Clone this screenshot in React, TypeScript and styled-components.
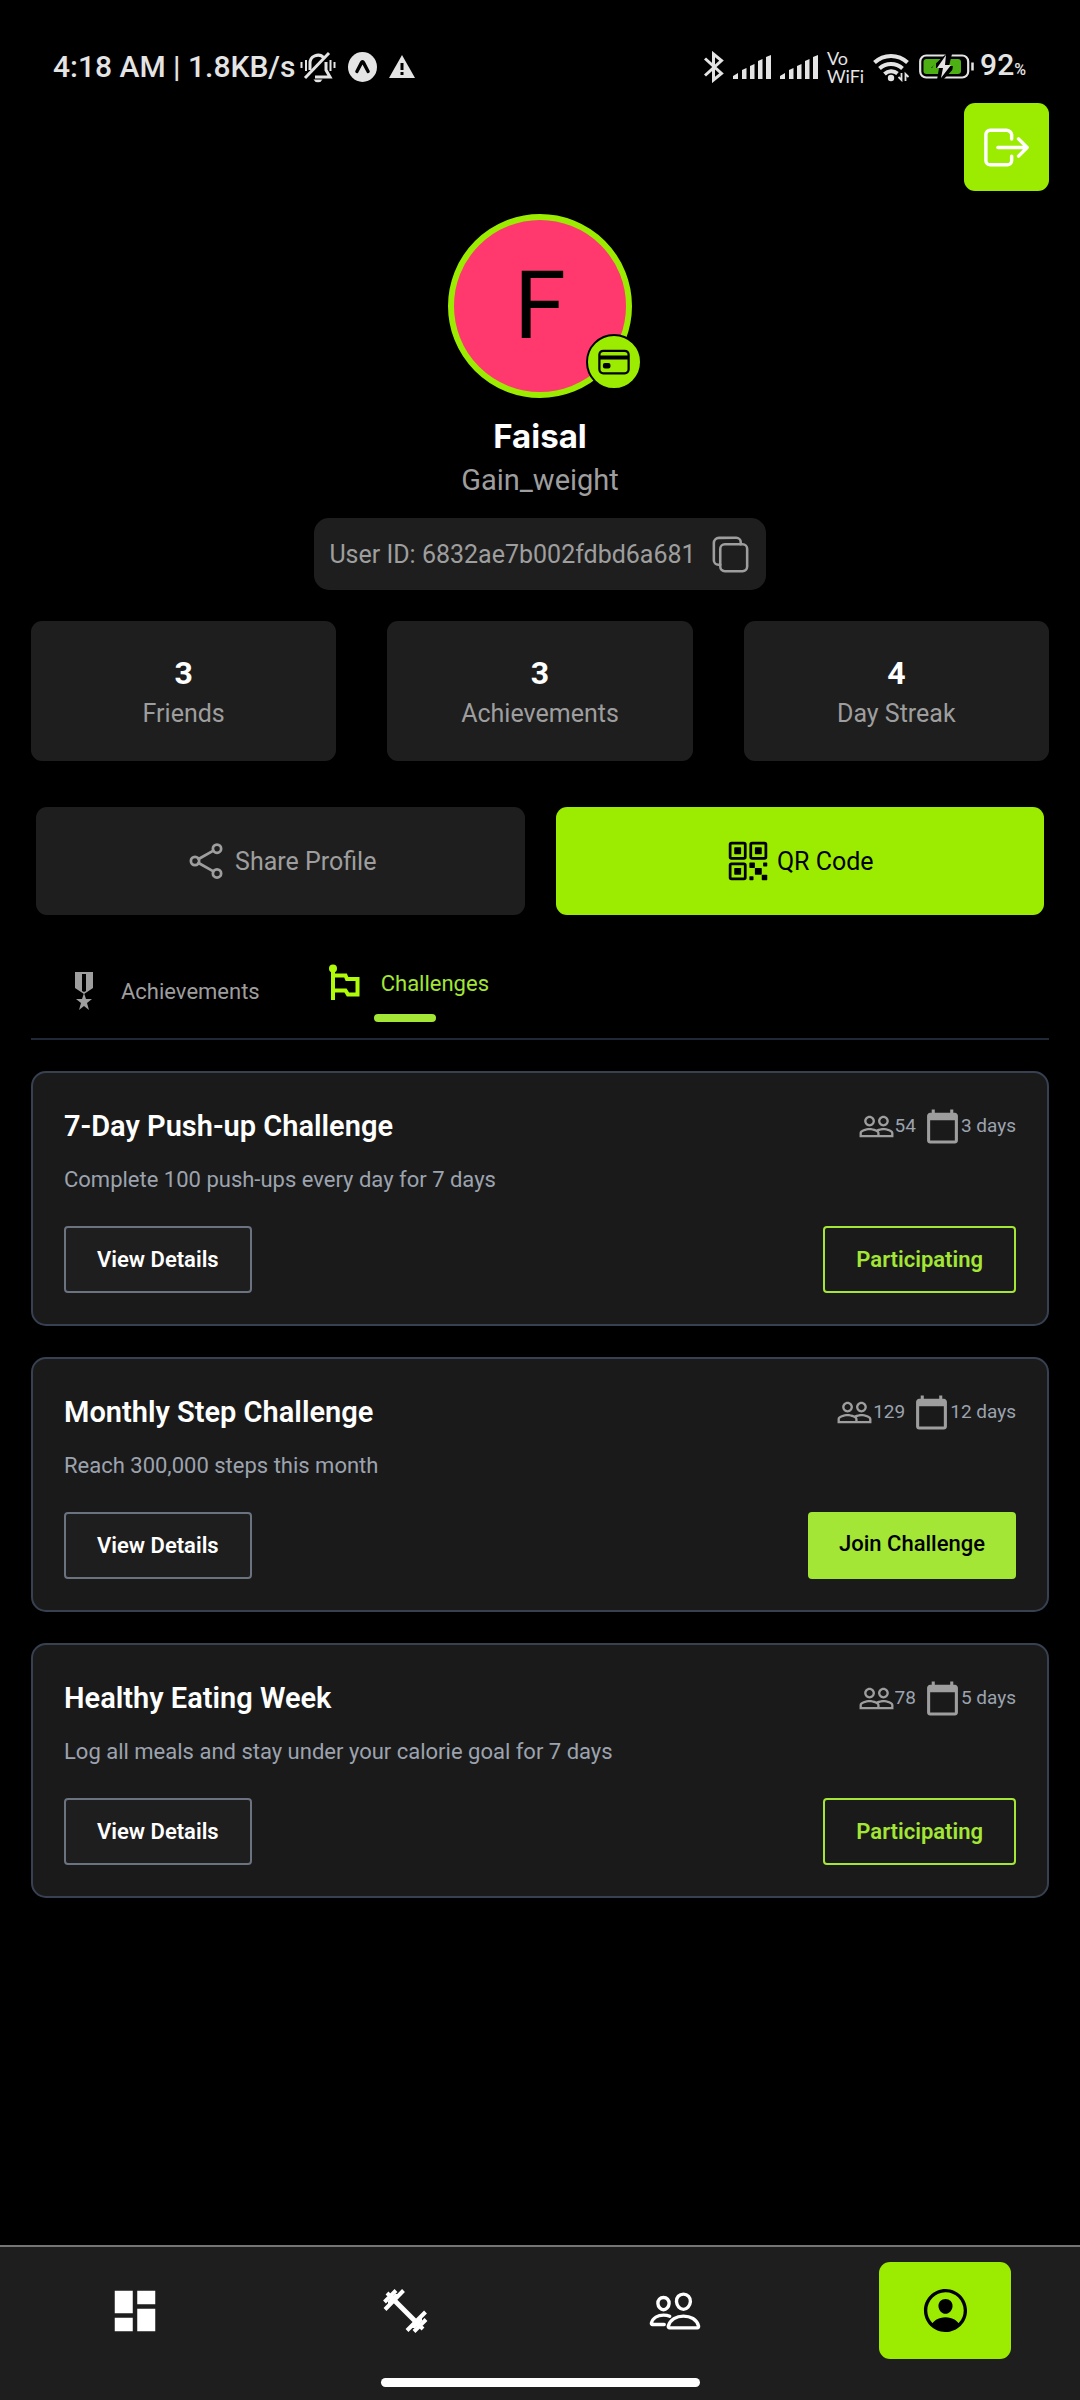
import React from "react";
import styled, { createGlobalStyle } from "styled-components";
import {
  IoCardOutline,
  IoCopyOutline,
  IoLogOutOutline,
  IoPeopleOutline,
  IoPersonCircleOutline,
  IoQrCodeOutline,
  IoShareSocialOutline,
} from "react-icons/io5";
import { MdCalendarToday, MdDashboard, MdPeopleOutline } from "react-icons/md";

const color = {
  lime: "#9bec00",
  limeSoft: "#a3e635",
  surface: "#1e1e1e",
  card: "#1a1a1a",
  muted: "#9e9e9e",
  slate: "#9ca3af",
  status: "#e4e4e4",
};

const GlobalStyle = createGlobalStyle`
  * { box-sizing: border-box; }
  body {
    margin: 0;
    background: #000;
    color: #fff;
    font-family: Roboto, "Liberation Sans", sans-serif;
  }
  button {
    margin: 0;
    padding: 0;
    border: 0;
    background: none;
    color: inherit;
    font-family: inherit;
    cursor: pointer;
  }
  h1, h2, p, dl, dt, dd { margin: 0; font-weight: 400; }
  svg { display: block; flex: none; }
`;

const Screen = styled.div`
  display: flex;
  flex-direction: column;
  min-height: 100vh;
`;

/* Status bar */

const StatusBar = styled.header`
  display: flex;
  align-items: center;
  justify-content: space-between;
  padding: 47px 54px 16px 53px;
  color: ${color.status};
`;

const StatusGroup = styled.div<{ $gap: number }>`
  display: flex;
  align-items: center;
  gap: ${(p) => p.$gap}px;
  height: 40px;
`;

const Clock = styled.span`
  font-size: 30px;
  font-weight: 500;
  line-height: 40px;
`;

const StatusIcons = styled.span`
  display: flex;
  align-items: center;
  gap: 12px;
`;

const VoWifi = styled.span`
  display: flex;
  flex-direction: column;
  font-family: Lato, sans-serif;
  font-size: 18px;
  font-weight: 400;
  line-height: 18px;
`;

const Charge = styled.span`
  display: flex;
  align-items: center;
  gap: 6px;
`;

const Percent = styled.span`
  font-size: 30px;
  font-weight: 500;
  line-height: 40px;

  small {
    font-size: 16px;
  }
`;

/* Profile */

const Main = styled.main`
  display: flex;
  flex-direction: column;
  padding: 0 31px 31px;
`;

const LogoutButton = styled.button`
  display: flex;
  align-items: center;
  align-self: flex-end;
  height: 88px;
  padding: 0 15px;
  border-radius: 11px;
  background: ${color.lime};
  color: #fff;
`;

const Profile = styled.section`
  display: flex;
  flex-direction: column;
  align-items: center;
  margin-top: 23px;
`;

const Avatar = styled.div`
  position: relative;
  display: flex;
  align-items: center;
  justify-content: center;
  width: 184px;
  height: 184px;
  border: 6px solid ${color.lime};
  border-radius: 50%;
  background: #ff386e;
  color: #000;
  font-size: 94px;
  line-height: 110px;
`;

const AvatarBadge = styled.button`
  position: absolute;
  right: -16px;
  bottom: 2px;
  display: flex;
  align-items: center;
  justify-content: center;
  width: 56px;
  height: 56px;
  border: 2px solid #000;
  border-radius: 50%;
  background: ${color.lime};
  color: #000;
`;

const Name = styled.h1`
  margin-top: 16px;
  font-family: Inter, Roboto, sans-serif;
  font-size: 33px;
  font-weight: 700;
  line-height: 44px;
`;

const Goal = styled.p`
  color: ${color.muted};
  font-size: 29px;
  line-height: 44px;
`;

const UserId = styled.div`
  display: flex;
  align-items: center;
  gap: 14px;
  margin-top: 16px;
  padding: 15px;
  border-radius: 15px;
  background: ${color.surface};
  color: ${color.muted};
  font-size: 25px;
  line-height: 40px;
`;

const Caption = styled.span`
  padding-top: 2px;
`;

const Stats = styled.dl`
  display: grid;
  grid-template-columns: repeat(3, 1fr);
  gap: 51px;
  margin-top: 31px;
`;

const Stat = styled.div`
  display: flex;
  flex-direction: column-reverse;
  padding: 31px 15px 27px;
  border-radius: 11px;
  background: ${color.surface};
  text-align: center;

  dt {
    color: ${color.muted};
    font-size: 25px;
    line-height: 40px;
  }

  dd {
    font-size: 32px;
    font-weight: 700;
    line-height: 42px;
  }
`;

const Actions = styled.div`
  display: grid;
  grid-template-columns: 1fr 1fr;
  gap: 31px;
  margin: 46px 5px 0;
`;

const ActionButton = styled.button<{ $primary?: boolean }>`
  display: flex;
  align-items: center;
  justify-content: center;
  gap: 7px;
  height: 108px;
  border-radius: 11px;
  background: ${(p) => (p.$primary ? color.lime : color.surface)};
  color: ${(p) => (p.$primary ? "#000" : color.muted)};
  font-size: 25px;
  line-height: 40px;
`;

/* Tabs */

const Tabs = styled.nav`
  display: flex;
  align-items: center;
  gap: 61px;
  margin-top: 45px;
  padding: 0 30px 16px;
  border-bottom: 2px solid #1f2937;
`;

const Tab = styled.button<{ $active?: boolean }>`
  display: flex;
  flex-direction: column;
  align-items: center;
  gap: 8px;
  color: ${(p) => (p.$active ? color.limeSoft : color.muted)};
  font-size: 22px;
  line-height: 44px;
`;

const TabLabel = styled.span`
  display: flex;
  align-items: center;
  gap: 14px;
`;

const TabMarker = styled.span`
  width: 62px;
  height: 8px;
  border-radius: 4px;
  background: ${color.limeSoft};
`;

/* Challenges */

const ChallengeList = styled.section`
  display: flex;
  flex-direction: column;
  gap: 31px;
  margin-top: 31px;
`;

const Card = styled.article`
  padding: 31px;
  border: 2px solid #374151;
  border-radius: 15px;
  background: ${color.card};
`;

const CardRow = styled.div`
  display: flex;
  justify-content: space-between;
`;

const CardTitle = styled.h2`
  font-size: 29px;
  font-weight: 600;
  line-height: 44px;
`;

const Meta = styled.div`
  display: flex;
  align-items: center;
  gap: 8px;
`;

const MetaItem = styled.span`
  display: flex;
  align-items: center;
  color: ${color.slate};
  font-size: 19px;
  line-height: 44px;

  svg {
    color: ${color.muted};
  }
`;

const Description = styled.p`
  margin: 16px 0 31px;
  color: ${color.slate};
  font-size: 22px;
  line-height: 31px;
`;

const CardButton = styled.button<{ $kind: "plain" | "joined" | "join" }>`
  display: flex;
  align-items: flex-start;
  padding: 16px 31px;
  border: ${(p) => (p.$kind === "join" ? "0" : "2px solid")};
  border-color: ${(p) => (p.$kind === "plain" ? "#6b7280" : color.limeSoft)};
  border-radius: 4px;
  background: ${(p) =>
    p.$kind === "join" ? color.limeSoft : p.$kind === "plain" ? color.surface : color.card};
  color: ${(p) =>
    p.$kind === "join" ? "#000" : p.$kind === "plain" ? "#fff" : color.limeSoft};
  font-size: 22px;
  font-weight: ${(p) => (p.$kind === "join" ? 500 : 600)};
  line-height: 31px;
`;

/* Bottom navigation */

const BottomNav = styled.nav`
  display: flex;
  flex-direction: column;
  align-items: center;
  gap: 19px;
  margin-top: auto;
  padding: 15px 0 13px;
  border-top: 2px solid #757575;
  background: ${color.surface};
`;

const NavItems = styled.div`
  display: grid;
  grid-template-columns: repeat(4, 1fr);
  justify-items: center;
  width: 100%;
`;

const NavButton = styled.button<{ $active?: boolean }>`
  display: flex;
  align-items: center;
  justify-content: center;
  width: 132px;
  height: 97px;
  border-radius: 11px;
  background: ${(p) => (p.$active ? color.lime : "transparent")};
  color: ${(p) => (p.$active ? "#000" : "#fff")};
`;

const HomeIndicator = styled.div`
  width: 319px;
  height: 9px;
  border-radius: 5px;
  background: #fff;
`;

/* Drawings */

const MutedBell = () => (
  <svg width="36" height="32" viewBox="0 0 36 32" fill="none" stroke="currentColor" strokeWidth="3">
    <path d="M10 19v-6a8 8 0 0 1 14-6M26 11v8l4 7H15" />
    <path d="M5 27 29 2" />
    <path d="M1.500 11v6M6 9v11M30.500 9v11M34.500 11v6" strokeWidth="2" />
    <path d="M13.500 28.500h9a5 5 0 0 1-9 0z" fill="currentColor" stroke="none" />
  </svg>
);

const ExpoBadge = () => (
  <svg width="29" height="30" viewBox="0 0 29 30">
    <ellipse cx="14.500" cy="15" rx="14.500" ry="15" fill="currentColor" />
    <path
      d="M14.500 8c1 0 2 .7 2.600 2l4.600 9c.6 1.300-1.600 3.200-2.800 1.700L14.500 12.500l-4.400 8.200c-1.200 1.500-3.400-.4-2.800-1.700l4.600-9c.6-1.300 1.600-2 2.600-2z"
      fill="#000"
    />
  </svg>
);

const Warning = () => (
  <svg width="26" height="24" viewBox="0 0 26 24">
    <path d="M13 0 26 23H0z" fill="currentColor" />
    <path d="M11.500 8h3v7h-3zM11.500 17h3v3h-3z" fill="#000" />
  </svg>
);

const Bluetooth = () => (
  <svg width="20" height="32" viewBox="0 0 20 32" fill="none" stroke="currentColor" strokeWidth="3">
    <path d="M1 7.500 17.500 22.500 9.500 29V3l8 6.500L1 24.500" />
  </svg>
);

const Signal = () => (
  <svg width="38" height="24" viewBox="0 0 38 24" fill="currentColor">
    <path d="M0 24v-3l5-3v6zM9 24v-9l4.500-2v11zM17 24V11l4.500-2v15zM25 24V6l4.500-2v20zM33 24V2l5-2v24z" />
  </svg>
);

const Wifi = () => (
  <svg width="37" height="29" viewBox="0 0 37 29" fill="none" stroke="currentColor" strokeWidth="4">
    <path d="M1.500 9.500a24 24 0 0 1 33 0M6.500 15.500a17 17 0 0 1 23 0M11.500 21a10 10 0 0 1 13-.500" />
    <circle cx="18" cy="25" r="3.200" fill="currentColor" stroke="none" />
    <path d="M28.500 20v7l-3-3M32.500 28v-7l3 3" strokeWidth="1.800" />
  </svg>
);

const Battery = () => (
  <svg width="55" height="26" viewBox="0 0 55 26">
    <rect x="1.200" y="1.500" width="48" height="22" rx="6" fill="none" stroke="currentColor" strokeWidth="2.200" />
    <rect x="4.500" y="5" width="37.500" height="15" rx="3" fill="#4caf13" />
    <path d="M53.500 8.500v8" stroke="currentColor" strokeWidth="2.500" />
    <path d="M27 0 12 14h8l-2 12h6l13-14h-7l3-12z" fill="#000" />
    <path d="M27 1 18 14h6l-2 10 10-13h-6z" fill="currentColor" />
    <path d="m17 7-4 7h4M33 19l5-8h-4" fill="#4caf13" />
  </svg>
);

const Medal = () => (
  <svg width="46" height="46" viewBox="0 0 46 46" fill="currentColor">
    <path d="M14 4h18v16l-9 6-9-6zM21 6v17l2 1 2-1V6z" fillRule="evenodd" />
    <path d="m23 25 2 6h6l-5 4 2 7-5-4-5 4 2-7-5-4h6z" />
  </svg>
);

const Flag = () => (
  <svg width="46" height="46" viewBox="0 0 46 46" fill="none" stroke="#b0fb08" strokeWidth="4">
    <circle cx="12" cy="8.500" r="4" fill="#b0fb08" stroke="none" />
    <path d="M12 8v32M12 15.500h12.500l1.500 3.500h10.500v15.500H27l-2.500-4H12" />
  </svg>
);

const Dumbbell = () => (
  <svg width="54" height="54" viewBox="0 0 54 54" fill="currentColor" stroke="currentColor" strokeWidth="4">
    <path d="M15 15 39 39" strokeWidth="5" />
    <path d="M7 25.500 25.500 6.500M6.500 18 18 6.500M9 9l6 6M29 46.500 47.500 28M36 47.500 48 35.500M39 39l6 6" />
    <path d="m10 17 7-7 5 0-12 12zM44 37l-7 7-5 0 12-12z" stroke="none" />
  </svg>
);

type Challenge = {
  title: string;
  text: string;
  people: number;
  days: number;
  joined: boolean;
};

const challenges: Challenge[] = [
  {
    title: "7-Day Push-up Challenge",
    text: "Complete 100 push-ups every day for 7 days",
    people: 54,
    days: 3,
    joined: true,
  },
  {
    title: "Monthly Step Challenge",
    text: "Reach 300,000 steps this month",
    people: 129,
    days: 12,
    joined: false,
  },
  {
    title: "Healthy Eating Week",
    text: "Log all meals and stay under your calorie goal for 7 days",
    people: 78,
    days: 5,
    joined: true,
  },
];

const stats = [
  { label: "Friends", value: 3 },
  { label: "Achievements", value: 3 },
  { label: "Day Streak", value: 4 },
];

export default function App() {
  return (
    <Screen>
      <GlobalStyle />
      <StatusBar>
        <StatusGroup $gap={4}>
          <Clock>4:18 AM | 1.8KB/s</Clock>
          <StatusIcons>
            <MutedBell />
            <ExpoBadge />
            <Warning />
          </StatusIcons>
        </StatusGroup>
        <StatusGroup $gap={9}>
          <Bluetooth />
          <Signal />
          <Signal />
          <VoWifi>
            <span>Vo</span>
            <span>WiFi</span>
          </VoWifi>
          <Wifi />
          <Charge>
            <Battery />
            <Percent>
              92<small>%</small>
            </Percent>
          </Charge>
        </StatusGroup>
      </StatusBar>

      <Main>
        <LogoutButton aria-label="Log out">
          <IoLogOutOutline size={55} />
        </LogoutButton>

        <Profile>
          <Avatar>
            F
            <AvatarBadge aria-label="Membership card">
              <IoCardOutline size={36} />
            </AvatarBadge>
          </Avatar>
          <Name>Faisal</Name>
          <Goal>Gain_weight</Goal>
          <UserId>
            <Caption>User ID: 6832ae7b002fdbd6a681</Caption>
            <button aria-label="Copy user ID">
              <IoCopyOutline size={41} />
            </button>
          </UserId>
        </Profile>

        <Stats>
          {stats.map((s) => (
            <Stat key={s.label}>
              <dt>{s.label}</dt>
              <dd>{s.value}</dd>
            </Stat>
          ))}
        </Stats>

        <Actions>
          <ActionButton>
            <IoShareSocialOutline size={44} />
            <Caption>Share Profile</Caption>
          </ActionButton>
          <ActionButton $primary>
            <IoQrCodeOutline size={44} />
            <Caption>QR Code</Caption>
          </ActionButton>
        </Actions>

        <Tabs>
          <Tab>
            <TabLabel>
              <Medal />
              <Caption>Achievements</Caption>
            </TabLabel>
          </Tab>
          <Tab $active aria-current="true">
            <TabLabel>
              <Flag />
              <Caption>Challenges</Caption>
            </TabLabel>
            <TabMarker />
          </Tab>
        </Tabs>

        <ChallengeList>
          {challenges.map((c) => (
            <Card key={c.title}>
              <CardRow>
                <CardTitle>{c.title}</CardTitle>
                <Meta>
                  <MetaItem>
                    <MdPeopleOutline size={37} />
                    {c.people}
                  </MetaItem>
                  <MetaItem>
                    <MdCalendarToday size={37} />
                    {c.days} days
                  </MetaItem>
                </Meta>
              </CardRow>
              <Description>{c.text}</Description>
              <CardRow>
                <CardButton $kind="plain">View Details</CardButton>
                <CardButton $kind={c.joined ? "joined" : "join"}>
                  {c.joined ? "Participating" : "Join Challenge"}
                </CardButton>
              </CardRow>
            </Card>
          ))}
        </ChallengeList>
      </Main>

      <BottomNav>
        <NavItems>
          <NavButton aria-label="Dashboard">
            <MdDashboard size={54} />
          </NavButton>
          <NavButton aria-label="Workouts">
            <Dumbbell />
          </NavButton>
          <NavButton aria-label="Friends">
            <IoPeopleOutline size={54} />
          </NavButton>
          <NavButton $active aria-label="Profile">
            <IoPersonCircleOutline size={53} />
          </NavButton>
        </NavItems>
        <HomeIndicator />
      </BottomNav>
    </Screen>
  );
}
